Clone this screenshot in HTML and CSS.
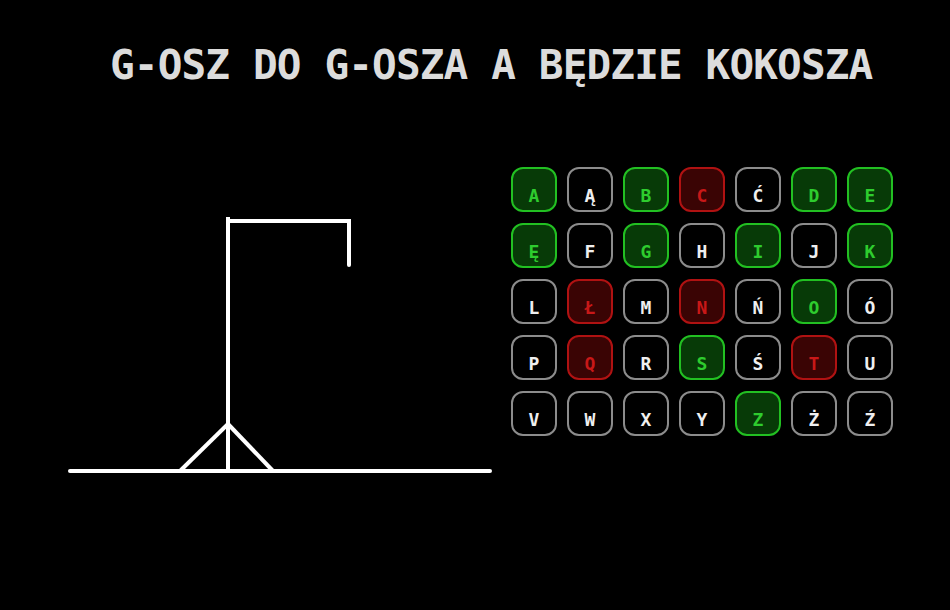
FILE: index.html
```html
<!DOCTYPE html>
<html lang="pl">
<head>
<meta charset="utf-8">
<title>Wisielec</title>
<link rel="stylesheet" href="styles.css">
</head>
<body>
<h1 class="title">G-OSZ DO G-OSZA A BĘDZIE KOKOSZA</h1>
<main class="game">
  <svg class="gallows" width="440" height="320" viewBox="0 0 440 320">
    <g stroke="#fff" stroke-width="4" fill="none">
      <line x1="10" y1="304" x2="430" y2="304" stroke-linecap="round"/>
      <line x1="168" y1="52" x2="168" y2="304" stroke-linecap="square"/>
      <line x1="168" y1="54" x2="289" y2="54" stroke-linecap="square"/>
      <line x1="289" y1="54" x2="289" y2="98" stroke-linecap="round"/>
      <line x1="168" y1="257" x2="120" y2="304"/>
      <line x1="168" y1="257" x2="213" y2="304"/>
    </g>
  </svg>
  <div class="keys">
    <button class="key ok">A</button>
    <button class="key">Ą</button>
    <button class="key ok">B</button>
    <button class="key bad">C</button>
    <button class="key">Ć</button>
    <button class="key ok">D</button>
    <button class="key ok">E</button>
    <button class="key ok">Ę</button>
    <button class="key">F</button>
    <button class="key ok">G</button>
    <button class="key">H</button>
    <button class="key ok">I</button>
    <button class="key">J</button>
    <button class="key ok">K</button>
    <button class="key">L</button>
    <button class="key bad">Ł</button>
    <button class="key">M</button>
    <button class="key bad">N</button>
    <button class="key">Ń</button>
    <button class="key ok">O</button>
    <button class="key">Ó</button>
    <button class="key">P</button>
    <button class="key bad">Q</button>
    <button class="key">R</button>
    <button class="key ok">S</button>
    <button class="key">Ś</button>
    <button class="key bad">T</button>
    <button class="key">U</button>
    <button class="key">V</button>
    <button class="key">W</button>
    <button class="key">X</button>
    <button class="key">Y</button>
    <button class="key ok">Z</button>
    <button class="key">Ż</button>
    <button class="key">Ź</button>
  </div>
</main>
</body>
</html>
```

FILE: styles.css
```css
html, body {
  margin: 0;
  padding: 0;
  background: #000;
}

body {
  width: 950px;
  height: 610px;
  overflow: hidden;
  font-family: "DejaVu Sans Mono", "Liberation Mono", monospace;
}

.title {
  margin: 0;
  padding: 41px 0 0 110px;
  font-size: 41px;
  line-height: 48px;
  font-weight: bold;
  letter-spacing: -0.86px;
  color: #dcdcdc;
  white-space: nowrap;
}

.game {
  display: flex;
  align-items: flex-start;
  gap: 11px;
  margin-top: 78px;
  padding-left: 60px;
}

.gallows {
  display: block;
  flex: none;
}

.keys {
  display: grid;
  grid-template-columns: repeat(7, 46px);
  grid-auto-rows: 45px;
  column-gap: 10px;
  row-gap: 11px;
}

.key {
  box-sizing: border-box;
  margin: 0;
  padding: 12px 0 0;
  width: 46px;
  height: 45px;
  border: 2px solid #8c8c8c;
  border-radius: 12px;
  background: #000;
  color: #efefef;
  font-family: "DejaVu Sans Mono", "Liberation Mono", monospace;
  font-weight: bold;
  font-size: 18px;
  line-height: 1;
  display: flex;
  align-items: center;
  justify-content: center;
}

.key.ok {
  border-color: #22c022;
  background: #073a07;
  color: #2ecc2e;
}

.key.bad {
  border-color: #b01212;
  background: #3a0404;
  color: #c81818;
}
```
